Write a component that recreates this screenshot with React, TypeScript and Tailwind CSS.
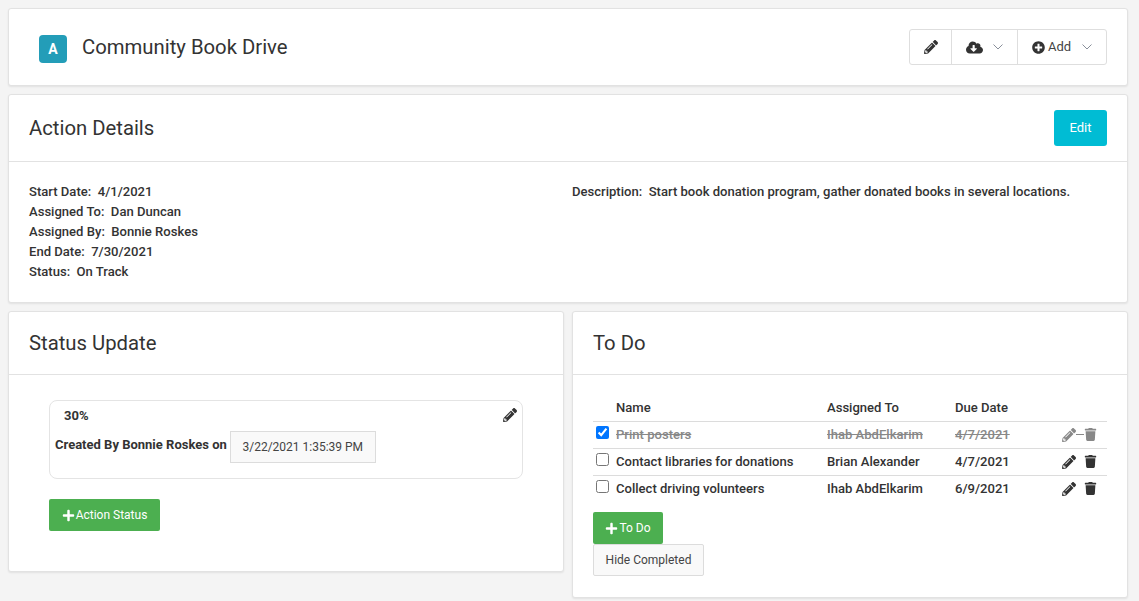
import { FaPencilAlt, FaCloudDownloadAlt, FaPlusCircle, FaPlus, FaTrash } from "react-icons/fa";

function Chevron() {
  return (
    <svg width="10" height="6" viewBox="0 0 10 6" fill="none" stroke="#6b7280" strokeWidth="0.8">
      <path d="M0.5 0.5 L5 5 L9.5 0.5" />
    </svg>
  );
}

const rows = [
  { name: "Print posters", who: "Ihab AbdElkarim", due: "4/7/2021", done: true },
  { name: "Contact libraries for donations", who: "Brian Alexander", due: "4/7/2021", done: false },
  { name: "Collect driving volunteers", who: "Ihab AbdElkarim", due: "6/9/2021", done: false },
];

function Card({ className = "", children }: { className?: string; children: React.ReactNode }) {
  return (
    <div className={"bg-white border border-[#e2e2e2] rounded-[3px] shadow-[0_1px_2px_rgba(0,0,0,0.08)] " + className}>
      {children}
    </div>
  );
}

function CardHeader({ title, className = "", children }: { title: string; className?: string; children?: React.ReactNode }) {
  return (
    <div className={"px-5 border-b border-[#e2e2e2] flex items-center justify-between " + className}>
      <h2 className="text-[20.3px] font-normal leading-6 text-[#333]">{title}</h2>
      {children}
    </div>
  );
}

function Field({ label, value }: { label: string; value: string }) {
  return (
    <div className="h-5 leading-5 whitespace-pre">
      {label}:{"  "}{value}
    </div>
  );
}

export default function App() {
  return (
    <div className="min-h-[601px] bg-[#f4f4f4] pl-2 pr-[11px] pt-2 font-['Roboto',sans-serif] text-[#333] text-[13.07px] font-medium flex flex-col gap-2">
      <Card className="h-[78px] pl-[30px] pr-5 flex items-center justify-between">
        <div className="flex items-center gap-[15px]">
          <div className="mt-1 w-[28px] h-[28px] rounded-[4px] bg-[#239db8] text-white text-[14px] font-bold flex items-center justify-center">
            A
          </div>
          <h1 className="text-[20.3px] font-normal leading-6 text-[#333]">Community Book Drive</h1>
        </div>
        <div className="h-[36px] w-[198px] border border-[#dedede] rounded-[3px] flex items-center font-normal text-[#444] text-[13px]">
          <div className="w-[41px] h-full flex items-center justify-center">
            <FaPencilAlt className="text-[14px] text-[#333]" />
          </div>
          <div className="w-[66px] h-full border-l border-[#dedede] flex items-center pl-[14px] gap-[10px]">
            <FaCloudDownloadAlt className="text-[17px] text-[#333]" />
            <Chevron />
          </div>
          <div className="flex-1 h-full border-l border-[#dedede] flex items-center pl-[14px]">
            <FaPlusCircle className="text-[13px] text-[#333] mr-[3px]" />
            <span>Add</span>
            <span className="ml-[11px]"><Chevron /></span>
          </div>
        </div>
      </Card>

      <Card className="h-[209px]">
        <CardHeader title="Action Details" className="h-[67px]">
          <button className="w-[53px] h-[36px] bg-[#00bcd4] text-white text-[13px] font-normal rounded-[3px]">Edit</button>
        </CardHeader>
        <div className="grid grid-cols-2 pl-5 pt-5 pr-5">
          <div>
            <Field label="Start Date" value="4/1/2021" />
            <Field label="Assigned To" value="Dan Duncan" />
            <Field label="Assigned By" value="Bonnie Roskes" />
            <Field label="End Date" value="7/30/2021" />
            <Field label="Status" value="On Track" />
          </div>
          <div className="pl-1">
            <Field label="Description" value="Start book donation program, gather donated books in several locations." />
          </div>
        </div>
      </Card>

      <div className="grid grid-cols-[556px_1fr] gap-2 items-start">
        <Card className="h-[261px]">
          <CardHeader title="Status Update" className="h-[63px]" />
          <div className="px-10 pt-[25px]">
            <div className="h-[79px] w-[474px] border border-[#e4e4e4] rounded-[8px] pl-[5px] pr-[5px] relative">
              <div className="pl-[9px] pt-[7px] leading-4 font-bold text-[13px]">30%</div>
              <FaPencilAlt className="absolute right-[5px] top-[7px] text-[14px] text-[#333]" />
              <div className="flex items-center mt-[7px]">
                <span className="font-bold text-[13px] whitespace-nowrap -mt-1">Created By Bonnie Roskes on</span>
                <span className="ml-[3px] w-[146px] h-[32px] bg-[#f9f9f9] border border-[#dcdcdc] flex items-center justify-center font-normal text-[12px] text-[#444]">
                  3/22/2021 1:35:39 PM
                </span>
              </div>
            </div>
            <button className="mt-[20px] w-[111px] h-[32px] bg-[#4caf50] text-white rounded-[2px] flex items-center justify-center gap-[1px] text-[12px] font-normal">
              <FaPlus className="text-[13px]" />
              Action Status
            </button>
          </div>
        </Card>

        <Card className="h-[287px]">
          <CardHeader title="To Do" className="h-[63px]" />
          <div className="px-5 pt-[19px]">
            <table className="w-[514px] table-fixed border-collapse">
              <thead>
                <tr className="h-[27px] border-b border-[#dcdcdc] text-left">
                  <th className="w-[23px]"></th>
                  <th className="w-[211px] font-medium pt-[1px]">Name</th>
                  <th className="w-[128px] font-medium pt-[1px]">Assigned To</th>
                  <th className="w-[107px] font-medium pt-[1px]">Due Date</th>
                  <th></th>
                </tr>
              </thead>
              <tbody>
                {rows.map((r) => (
                  <tr key={r.name} className={"h-[27px] border-b last:border-b-0 border-[#dcdcdc] " + (r.done ? "text-[#888] line-through" : "")}>
                    <td className="align-middle pl-[3px]">
                      <input type="checkbox" defaultChecked={r.done} className="block w-[13px] h-[13px] -mt-[4px] accent-[#0075ff]" />
                    </td>
                    <td className="whitespace-nowrap">{r.name}</td>
                    <td className="whitespace-nowrap">{r.who}</td>
                    <td>{r.due}</td>
                    <td>
                      <div className="flex items-center text-[14px]">
                        <FaPencilAlt className={r.done ? "text-[#888]" : "text-[#333]"} />
                        <span className="w-[8px] text-[13px] whitespace-pre overflow-hidden">{"    "}</span>
                        <FaTrash className={"text-[13px] " + (r.done ? "text-[#888]" : "text-[#333]")} />
                      </div>
                    </td>
                  </tr>
                ))}
              </tbody>
            </table>
            <button className="mt-[10px] w-[70px] h-[32px] bg-[#4caf50] text-white rounded-[2px] flex items-center justify-center gap-[1px] text-[12px] font-normal">
              <FaPlus className="text-[13px]" />
              To Do
            </button>
            <button className="block w-[111px] h-[32px] bg-[#f9f9f9] border border-[#dcdcdc] rounded-[2px] text-[12px] font-normal text-[#444]">
              Hide Completed
            </button>
          </div>
        </Card>
      </div>
    </div>
  );
}
